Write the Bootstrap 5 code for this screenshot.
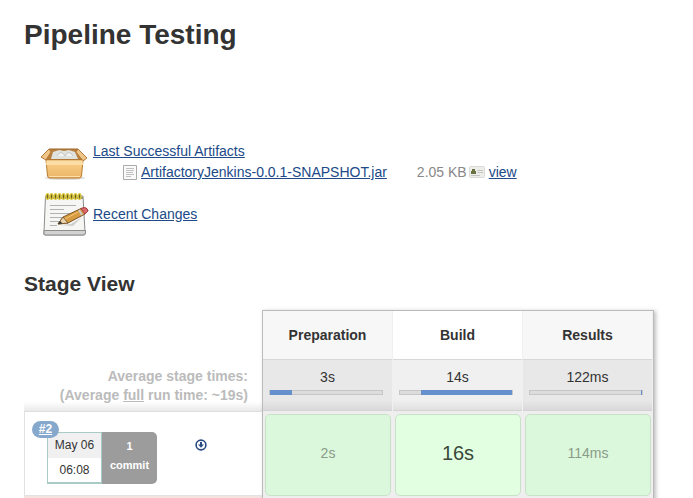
<!DOCTYPE html>
<html lang="en">
<head>
<meta charset="utf-8">
<meta name="viewport" content="width=device-width, initial-scale=1">
<title>Pipeline Testing</title>
<link href="https://cdn.jsdelivr.net/npm/bootstrap@5.3.0/dist/css/bootstrap.min.css" rel="stylesheet">
<style>
html,body{height:498px;overflow:hidden}
body{font:14px/20px "Liberation Sans",Arial,sans-serif;color:#333;background:#fff}
a{color:#204a87}
h1{font-size:28px;line-height:32px;font-weight:700;padding-top:19px;height:141px}
h2{font-size:21px;line-height:26px;font-weight:700;height:39px}
.artifacts{height:52px;padding-left:16px}
.artifacts .pic{margin-top:4px}
.artifact-title{height:20px}
.artifact-file{padding:1px 0 0 30px}
.changes{height:78px;padding-left:16px}
.change-link{padding-top:11px}
.pic{width:53px;flex:none}
.file-size{color:#888;margin-left:30px}
.view-icon{margin:0 4px 0 2px}
.stages{width:630px;height:188px}
.side{width:238px}
.averages{height:101px;padding:57px 14px 0 0;line-height:18.5px;font-weight:700;color:#bbb;background:linear-gradient(#fff 92px,#e9e9e9 101px)}
.run{height:85px;border:1px solid #e2e2e2;border-top-color:#dedede;border-right:0;position:relative}
.run-next{border-top:2px solid #f3e4e2;height:4px}
.run-tag{position:absolute;left:7px;top:9px;width:27px;height:17px;line-height:17px;border-radius:9px;background:#86a8cc;font-size:12px;font-weight:700;text-align:center;z-index:2}
.run-tag a{color:#fff}
.run-info{margin:20px 0 0 22px;width:110px;height:52px;font-size:12px}
.run-date{width:55px;border:1px solid #a9cbc5;border-bottom-width:2px;text-align:center}
.run-date div{height:25px;line-height:25px}
.run-date div:first-child{background:#f0f0f0}
.commits{width:55px;background:#9c9c9c;border-radius:0 5px 5px 0;color:#fff;font-size:11px;font-weight:700;line-height:19px;padding-top:5px;text-align:center}
.down{margin:27px 0 0 38px;width:12px;height:12px}
.board{width:392px;height:210px;border:1px solid #bbb;box-shadow:2px 1px 4px rgba(0,0,0,.25);background:#eee}
.stage{width:130px;flex:none;border-right:1px solid #f0f0f0}
.stage-name{height:48px;line-height:48px;font-weight:700;background:#f7f7f7;text-align:center}
.stage-time{height:52px;border-top:1px solid #d8d8d8;text-align:center;padding:7px 9px 0 6px;background:linear-gradient(#e8e8e8 40px,#d9d7d9 51px);border-bottom:1px solid #d3d3d3}
.stage-time span{display:block;padding-left:3px}
.build .stage-name{background:#fff}
.build .stage-time{background:linear-gradient(#f0f0f0 40px,#e0dee0 51px)}
.meter{height:5px;margin-top:3px;border:1px solid #c6c6c6;background:#dcdcdc;display:flex}
.meter i{background:#6590cc;height:5px;margin-top:-1px}
.result{margin:3px 1px 2px 2px;height:82px;line-height:77px;border:1px solid #c8e2c8;border-radius:5px;background:#dcf8dc;color:#899b89;text-align:center}
.build .result{background:#e2ffe2;color:#394839;font-size:20px;line-height:76px}
</style>
<script src="https://cdn.jsdelivr.net/npm/bootstrap@5.3.0/dist/js/bootstrap.bundle.min.js"></script>
</head>
<body>
<main class="ps-4">
<h1 class="m-0">Pipeline Testing</h1>
<section class="artifacts d-flex">
<svg class="pic" width="53" height="40" viewBox="0 0 53 40">
<defs><linearGradient id="bx" x2="0" y2="1"><stop stop-color="#fad08c"/><stop offset="1" stop-color="#ecb567"/></linearGradient></defs>
<ellipse cx="25" cy="33" rx="20" ry="2" fill="#bbb" opacity=".5"/>
<path d="M9 4H38L43 15H6Z" fill="#b9803f" stroke="#9c6529"/>
<path d="M11 14L13 7L19 5L24 6L29 5L35 7L38 14Z" fill="#dfe2de"/><path d="M17 11Q21 4 25 11Q29 4 33 11" fill="#f3f4f2" stroke="#c3c6c1"/>
<path d="M9 4L1 12L6 15L11 7ZM38 4L47 13L43 16L36 7Z" fill="#efc58a" stroke="#b37a35"/>
<path d="M6 15H43L41.500 31Q41 33 39 33H10Q8 33 7.500 31Z" fill="url(#bx)" stroke="#b97d31"/>
<path d="M6.500 15.500H42.500L43 20H6Z" fill="#fddda6"/><path d="M9 31.500H40" stroke="#ffdfaa"/>
</svg>
<div class="text-nowrap">
<div class="artifact-title"><a href="#">Last Successful Artifacts</a></div>
<div class="artifact-file d-flex align-items-center">
<svg class="me-1" width="14" height="16" viewBox="0 0 14 16"><path d="M.5 1.500H13.500V15.500H.5Z" fill="#fafafa" stroke="#aaa"/><path d="M3 4.500H11M3 6.500H11M3 8.500H10M3 10.500H11M3 12.500H8" stroke="#c0c0c0"/></svg>
<a href="#">ArtifactoryJenkins-0.0.1-SNAPSHOT.jar</a><span class="file-size">2.05 KB</span>
<svg class="view-icon" width="16" height="12" viewBox="0 0 16 12"><rect x=".5" y=".5" width="15" height="11" rx="1" fill="#ededea" stroke="#d9d9d6"/><path d="M2 8V5H3V3H6V5H7V8Z" fill="#697240"/><path d="M8.500 4.500H14M8.500 6.500H14M2 9.500H11" stroke="#c4c4c4"/></svg>
<a href="#">view</a>
</div></div>
</section>
<section class="changes d-flex">
<svg class="pic" width="53" height="48" viewBox="0 0 53 48">
<path d="M5.500 3H43L45 39Q46 42 44 42H5Q3 42 4 39Z" fill="#f6f6f5" stroke="#8d8d8d"/>
<path d="M4 37.500H45.500V40Q45 42 43 42H6Q3.500 42 4 40Z" fill="#d2d2d1" stroke="#8d8d8d"/>
<path d="M10 12.500H36M10 16.500H24M10 20.500H35M10 24.500H26M10 28.500H20M10 32.500H17" stroke="#b1b3b1" stroke-width="1.200"/>
<path d="M6 5H43" stroke="#a09565" stroke-width="2"/>
<g fill="#6d621f" stroke="#dcc93a" stroke-width="1.300"><ellipse cx="7.500" cy="3.500" rx="1.400" ry="2.800"/><ellipse cx="11.500" cy="3.500" rx="1.400" ry="2.800"/><ellipse cx="15.500" cy="3.500" rx="1.400" ry="2.800"/><ellipse cx="19.500" cy="3.500" rx="1.400" ry="2.800"/><ellipse cx="23.500" cy="3.500" rx="1.400" ry="2.800"/><ellipse cx="27.500" cy="3.500" rx="1.400" ry="2.800"/><ellipse cx="31.500" cy="3.500" rx="1.400" ry="2.800"/><ellipse cx="35.500" cy="3.500" rx="1.400" ry="2.800"/><ellipse cx="39.500" cy="3.500" rx="1.400" ry="2.800"/></g>
<path d="M20 32L31 31L42 24L33 33Z" fill="#aaa" opacity=".5"/>
<path d="M18 31L23 24L41 15.500L46 15L48 18L45 21L28 30Z" fill="#d79b42" stroke="#7d5525"/>
<path d="M18 31L23 24L28 30Z" fill="#ead4a9" stroke="#806138"/><path d="M18 31L20 28L22.500 30.500Z" fill="#333"/>
<path d="M41 15.500L44 14.500Q48 15 48 18L45 21Z" fill="#dd686b" stroke="#a34249"/><path d="M39 17L42 22" stroke="#ccc" stroke-width="2"/><path d="M25 26L38 19" stroke="#f4c770"/>
</svg>
<div class="change-link"><a href="#">Recent Changes</a></div>
</section>
<h2 class="m-0">Stage View</h2>
<section class="stages d-flex">
<div class="side">
<div class="averages text-end">Average stage times:<br>(Average <u>full</u> run time: ~19s)</div>
<div class="run d-flex">
<span class="run-tag"><a href="#">#2</a></span>
<div class="run-info d-flex"><div class="run-date"><div>May 06</div><div>06:08</div></div><div class="commits">1<br>commit</div></div>
<svg class="down" viewBox="0 0 12 12"><circle cx="6" cy="6" r="4.900" fill="#fff" stroke="#284a80" stroke-width="1.600"/><path d="M5 3H7V5.500H9L6 8.700L3 5.500H5Z" fill="#284a80"/></svg>
</div>
<div class="run-next"></div>
</div>
<div class="board d-flex">
<div class="stage"><div class="stage-name">Preparation</div><div class="stage-time"><span>3s</span><div class="meter"><i style="width:20%"></i></div></div><div class="result">2s</div></div>
<div class="stage build"><div class="stage-name">Build</div><div class="stage-time"><span>14s</span><div class="meter"><i style="width:81%;margin-left:19%"></i></div></div><div class="result">16s</div></div>
<div class="stage"><div class="stage-name">Results</div><div class="stage-time"><span>122ms</span><div class="meter"><i style="width:1%;margin-left:99%"></i></div></div><div class="result">114ms</div></div>
</div>
</section>
</main>
</body>
</html>
